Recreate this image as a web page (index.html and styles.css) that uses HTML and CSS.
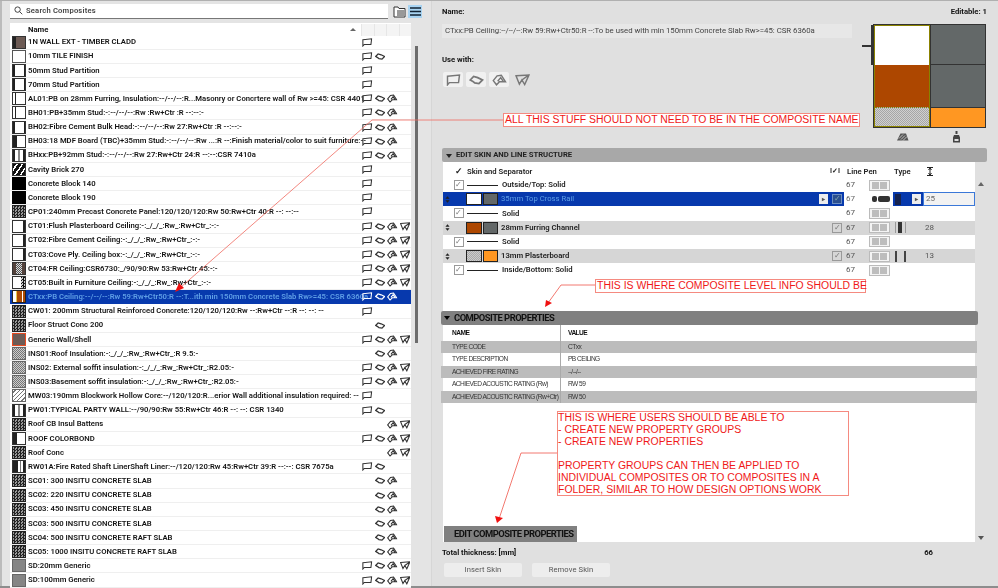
FILE: index.html
```html
<!DOCTYPE html>
<html lang="en">
<head>
<meta charset="utf-8">
<title>Composites</title>
<link rel="stylesheet" href="styles.css">
</head>
<body>
<svg class="defs" width="0" height="0" aria-hidden="true">
  <symbol id="w" viewBox="0 0 12 10"><path d="M1 1.800 11 .8 10.200 7.200 2.600 7.200 1 9Z" fill="none" stroke="currentColor" stroke-width="1.200"/></symbol>
  <symbol id="c" viewBox="0 0 12 10"><path d="M.8 5 3.600 2 7 3 11 5 8 8 4.500 7.500 3 6.200Z" fill="none" stroke="currentColor" stroke-width="1.500"/></symbol>
  <symbol id="s" viewBox="0 0 12 10"><path d="M.8 5.500 4 1.500 7.500 1 11 6.500 6 6.500 3.500 9ZM4.500 6 7 3 9 6" fill="none" stroke="currentColor" stroke-width="1.200"/></symbol>
  <symbol id="r" viewBox="0 0 12 10"><path d="M.6 1.500 11.400.8 7.800 8.800 5.500 5 3.400 8.500 .6 1.500ZM5.500 5 11.400.8" fill="none" stroke="currentColor" stroke-width="1.200"/></symbol>
  <symbol id="d" viewBox="0 0 6 8"><path d="M3 0 5.500 3H.5ZM3 8 .5 5H5.500Z" fill="currentColor"/></symbol>
</svg>
<div class="app">
  <section class="left">
    <div class="searchbar">
      <div class="search">
        <svg class="mag" viewBox="0 0 10 10"><circle cx="4" cy="4" r="3" fill="none" stroke="#333" stroke-width="1"/><path d="M6.200 6.200 9.200 9.200" stroke="#333" stroke-width="1"/></svg>
        <span>Search Composites</span>
      </div>
      <svg class="tool" viewBox="0 0 13 13"><path d="M1 2h4l1 1.500h6V12H1Z" fill="#fff" stroke="#333"/><path d="M4 6h7M4 8h7M4 10h7" stroke="#333"/></svg>
      <div class="toolon"><svg viewBox="0 0 11 9"><path d="M0 1h11M0 4.500h11M0 8h11" stroke="#123" stroke-width="1.500"/></svg></div>
    </div>
    <div class="listwrap">
      <div class="list">
        <div class="lhead"><span class="lname">Name</span><span class="sort"></span><i></i><i></i><i></i><i></i></div>
        <div class="row"><span class="sw brown"></span><span class="nm">1N WALL EXT - TIMBER CLADD</span><span class="ic"><svg><use href="#w"/></svg></span><span class="ic"></span><span class="ic"></span><span class="ic"></span></div>
        <div class="row"><span class="sw blank"></span><span class="nm">10mm TILE FINISH</span><span class="ic"><svg><use href="#w"/></svg></span><span class="ic"><svg><use href="#c"/></svg></span><span class="ic"></span><span class="ic"></span></div>
        <div class="row"><span class="sw stud"></span><span class="nm">50mm Stud Partition</span><span class="ic"><svg><use href="#w"/></svg></span><span class="ic"></span><span class="ic"></span><span class="ic"></span></div>
        <div class="row"><span class="sw stud"></span><span class="nm">70mm Stud Partition</span><span class="ic"><svg><use href="#w"/></svg></span><span class="ic"></span><span class="ic"></span><span class="ic"></span></div>
        <div class="row"><span class="sw stud2"></span><span class="nm">AL01:PB on 28mm Furring, Insulation:--/--/--:R...Masonry or Concrtere wall of Rw &gt;=45: CSR 4401</span><span class="ic"><svg><use href="#w"/></svg></span><span class="ic"><svg><use href="#c"/></svg></span><span class="ic"><svg><use href="#s"/></svg></span><span class="ic"></span></div>
        <div class="row"><span class="sw stud2"></span><span class="nm">BH01:PB+35mm Stud:-:--/--/--:Rw :Rw+Ctr :R --:--:-</span><span class="ic"><svg><use href="#w"/></svg></span><span class="ic"><svg><use href="#c"/></svg></span><span class="ic"><svg><use href="#s"/></svg></span><span class="ic"></span></div>
        <div class="row"><span class="sw stud"></span><span class="nm">BH02:Fibre Cement Bulk Head:-:--/--/--:Rw 27:Rw+Ctr :R --:--:-</span><span class="ic"><svg><use href="#w"/></svg></span><span class="ic"><svg><use href="#c"/></svg></span><span class="ic"><svg><use href="#s"/></svg></span><span class="ic"></span></div>
        <div class="row"><span class="sw mdf"></span><span class="nm">BH03:18 MDF Board (TBC)+35mm Stud:-:--/--/--:Rw ...:R --:Finish material/color to suit furniture:--</span><span class="ic"><svg><use href="#w"/></svg></span><span class="ic"><svg><use href="#c"/></svg></span><span class="ic"><svg><use href="#s"/></svg></span><span class="ic"></span></div>
        <div class="row"><span class="sw studs"></span><span class="nm">BHxx:PB+92mm Stud:-:--/--/--:Rw 27:Rw+Ctr 24:R --:--:CSR 7410a</span><span class="ic"><svg><use href="#w"/></svg></span><span class="ic"><svg><use href="#c"/></svg></span><span class="ic"><svg><use href="#s"/></svg></span><span class="ic"></span></div>
        <div class="row"><span class="sw brick"></span><span class="nm">Cavity Brick 270</span><span class="ic"><svg><use href="#w"/></svg></span><span class="ic"></span><span class="ic"></span><span class="ic"></span></div>
        <div class="row"><span class="sw black"></span><span class="nm">Concrete Block 140</span><span class="ic"><svg><use href="#w"/></svg></span><span class="ic"></span><span class="ic"></span><span class="ic"></span></div>
        <div class="row"><span class="sw black"></span><span class="nm">Concrete Block 190</span><span class="ic"><svg><use href="#w"/></svg></span><span class="ic"></span><span class="ic"></span><span class="ic"></span></div>
        <div class="row"><span class="sw conc"></span><span class="nm">CP01:240mm Precast Concrete Panel:120/120/120:Rw 50:Rw+Ctr 40:R --: --:--</span><span class="ic"><svg><use href="#w"/></svg></span><span class="ic"></span><span class="ic"></span><span class="ic"></span></div>
        <div class="row"><span class="sw rstud"></span><span class="nm">CT01:Flush Plasterboard Ceiling:-:_/_/_:Rw_:Rw+Ctr_:-:-</span><span class="ic"><svg><use href="#w"/></svg></span><span class="ic"><svg><use href="#c"/></svg></span><span class="ic"><svg><use href="#s"/></svg></span><span class="ic"><svg><use href="#r"/></svg></span></div>
        <div class="row"><span class="sw rstud"></span><span class="nm">CT02:Fibre Cement Ceiling:-:_/_/_:Rw_:Rw+Ctr_:-:-</span><span class="ic"><svg><use href="#w"/></svg></span><span class="ic"><svg><use href="#c"/></svg></span><span class="ic"><svg><use href="#s"/></svg></span><span class="ic"><svg><use href="#r"/></svg></span></div>
        <div class="row"><span class="sw rstud"></span><span class="nm">CT03:Cove Ply. Ceiling box:-:_/_/_:Rw_:Rw+Ctr_:-:-</span><span class="ic"><svg><use href="#w"/></svg></span><span class="ic"><svg><use href="#c"/></svg></span><span class="ic"><svg><use href="#s"/></svg></span><span class="ic"><svg><use href="#r"/></svg></span></div>
        <div class="row"><span class="sw fr"></span><span class="nm">CT04:FR Ceiling:CSR6730:_/90/90:Rw 53:Rw+Ctr 45:-:-</span><span class="ic"><svg><use href="#w"/></svg></span><span class="ic"><svg><use href="#c"/></svg></span><span class="ic"><svg><use href="#s"/></svg></span><span class="ic"><svg><use href="#r"/></svg></span></div>
        <div class="row"><span class="sw rconc"></span><span class="nm">CT05:Built in Furniture Ceiling:-:_/_/_:Rw_:Rw+Ctr_:-:-</span><span class="ic"><svg><use href="#w"/></svg></span><span class="ic"><svg><use href="#c"/></svg></span><span class="ic"><svg><use href="#s"/></svg></span><span class="ic"><svg><use href="#r"/></svg></span></div>
        <div class="row sel"><span class="sw cur"></span><span class="nm">CTxx:PB Ceiling:--/--/--:Rw 59:Rw+Ctr50:R --:T...ith min 150mm Concrete Slab Rw&gt;=45: CSR 6360a</span><span class="ic"><svg><use href="#w"/></svg></span><span class="ic"><svg><use href="#c"/></svg></span><span class="ic"><svg><use href="#s"/></svg></span><span class="ic"></span></div>
        <div class="row"><span class="sw conc"></span><span class="nm">CW01: 200mm Structural Reinforced Concrete:120/120/120:Rw --:Rw+Ctr --:R --: --: --</span><span class="ic"><svg><use href="#w"/></svg></span><span class="ic"></span><span class="ic"></span><span class="ic"></span></div>
        <div class="row"><span class="sw conc"></span><span class="nm">Floor Struct Conc 200</span><span class="ic"></span><span class="ic"><svg><use href="#c"/></svg></span><span class="ic"></span><span class="ic"></span></div>
        <div class="row"><span class="sw generic"></span><span class="nm">Generic Wall/Shell</span><span class="ic"><svg><use href="#w"/></svg></span><span class="ic"><svg><use href="#c"/></svg></span><span class="ic"><svg><use href="#s"/></svg></span><span class="ic"><svg><use href="#r"/></svg></span></div>
        <div class="row"><span class="sw ins"></span><span class="nm">INS01:Roof Insulation:-:_/_/_:Rw_:Rw+Ctr_:R 9.5:-</span><span class="ic"></span><span class="ic"><svg><use href="#c"/></svg></span><span class="ic"><svg><use href="#s"/></svg></span><span class="ic"></span></div>
        <div class="row"><span class="sw ins"></span><span class="nm">INS02: External soffit insulation:-:_/_/_:Rw_:Rw+Ctr_:R2.05:-</span><span class="ic"><svg><use href="#w"/></svg></span><span class="ic"><svg><use href="#c"/></svg></span><span class="ic"><svg><use href="#s"/></svg></span><span class="ic"><svg><use href="#r"/></svg></span></div>
        <div class="row"><span class="sw ins"></span><span class="nm">INS03:Basement soffit insulation:-:_/_/_:Rw_:Rw+Ctr_:R2.05:-</span><span class="ic"><svg><use href="#w"/></svg></span><span class="ic"><svg><use href="#c"/></svg></span><span class="ic"><svg><use href="#s"/></svg></span><span class="ic"><svg><use href="#r"/></svg></span></div>
        <div class="row"><span class="sw hatch"></span><span class="nm">MW03:190mm Blockwork Hollow Core:--/120/120:R...erior Wall additional insulation required: --</span><span class="ic"><svg><use href="#w"/></svg></span><span class="ic"></span><span class="ic"></span><span class="ic"></span></div>
        <div class="row"><span class="sw studs"></span><span class="nm">PW01:TYPICAL PARTY WALL:--/90/90:Rw 55:Rw+Ctr 46:R --: --: CSR 1340</span><span class="ic"><svg><use href="#w"/></svg></span><span class="ic"><svg><use href="#c"/></svg></span><span class="ic"></span><span class="ic"></span></div>
        <div class="row"><span class="sw conc"></span><span class="nm">Roof CB Insul Battens</span><span class="ic"></span><span class="ic"></span><span class="ic"><svg><use href="#s"/></svg></span><span class="ic"><svg><use href="#r"/></svg></span></div>
        <div class="row"><span class="sw mdf"></span><span class="nm">ROOF COLORBOND</span><span class="ic"><svg><use href="#w"/></svg></span><span class="ic"><svg><use href="#c"/></svg></span><span class="ic"><svg><use href="#s"/></svg></span><span class="ic"><svg><use href="#r"/></svg></span></div>
        <div class="row"><span class="sw conc"></span><span class="nm">Roof Conc</span><span class="ic"></span><span class="ic"></span><span class="ic"><svg><use href="#s"/></svg></span><span class="ic"><svg><use href="#r"/></svg></span></div>
        <div class="row"><span class="sw shaft"></span><span class="nm">RW01A:Fire Rated Shaft LinerShaft Liner:--/120/120:Rw 45:Rw+Ctr 39:R --:--: CSR 7675a</span><span class="ic"><svg><use href="#w"/></svg></span><span class="ic"><svg><use href="#c"/></svg></span><span class="ic"></span><span class="ic"></span></div>
        <div class="row"><span class="sw conc"></span><span class="nm">SC01: 300 INSITU CONCRETE SLAB</span><span class="ic"></span><span class="ic"><svg><use href="#c"/></svg></span><span class="ic"><svg><use href="#s"/></svg></span><span class="ic"></span></div>
        <div class="row"><span class="sw conc"></span><span class="nm">SC02: 220 INSITU CONCRETE SLAB</span><span class="ic"></span><span class="ic"><svg><use href="#c"/></svg></span><span class="ic"><svg><use href="#s"/></svg></span><span class="ic"></span></div>
        <div class="row"><span class="sw conc"></span><span class="nm">SC03: 450 INSITU CONCRETE SLAB</span><span class="ic"></span><span class="ic"><svg><use href="#c"/></svg></span><span class="ic"><svg><use href="#s"/></svg></span><span class="ic"></span></div>
        <div class="row"><span class="sw conc"></span><span class="nm">SC03: 500 INSITU CONCRETE SLAB</span><span class="ic"></span><span class="ic"><svg><use href="#c"/></svg></span><span class="ic"><svg><use href="#s"/></svg></span><span class="ic"></span></div>
        <div class="row"><span class="sw conc"></span><span class="nm">SC04: 500 INSITU CONCRETE RAFT SLAB</span><span class="ic"></span><span class="ic"><svg><use href="#c"/></svg></span><span class="ic"><svg><use href="#s"/></svg></span><span class="ic"></span></div>
        <div class="row"><span class="sw conc"></span><span class="nm">SC05: 1000 INSITU CONCRETE RAFT SLAB</span><span class="ic"></span><span class="ic"><svg><use href="#c"/></svg></span><span class="ic"><svg><use href="#s"/></svg></span><span class="ic"></span></div>
        <div class="row"><span class="sw grey"></span><span class="nm">SD:20mm Generic</span><span class="ic"><svg><use href="#w"/></svg></span><span class="ic"><svg><use href="#c"/></svg></span><span class="ic"><svg><use href="#s"/></svg></span><span class="ic"><svg><use href="#r"/></svg></span></div>
        <div class="row"><span class="sw grey"></span><span class="nm">SD:100mm Generic</span><span class="ic"><svg><use href="#w"/></svg></span><span class="ic"><svg><use href="#c"/></svg></span><span class="ic"><svg><use href="#s"/></svg></span><span class="ic"><svg><use href="#r"/></svg></span></div>
      </div>
      <div class="lscroll"><div class="thumb"></div></div>
    </div>
  </section>

  <section class="right">
    <div class="head"><b>Name:</b><b>Editable: 1</b></div>
    <div class="top">
      <div class="meta">
        <div class="nameinput">CTxx:PB Ceiling:--/--/--:Rw 59:Rw+Ctr50:R --:To be used with min 150mm Concrete Slab Rw&gt;=45: CSR 6360a</div>
        <div class="usewith">Use with:</div>
        <div class="usebtns">
          <span class="ub on"><svg><use href="#w"/></svg></span>
          <span class="ub on"><svg><use href="#c"/></svg></span>
          <span class="ub on"><svg><use href="#s"/></svg></span>
          <span class="ub"><svg><use href="#r"/></svg></span>
        </div>
      </div>
      <div class="previewcol">
        <div class="preview">
          <div class="pvcol pvl">
            <div class="pv1 pvwhite"></div>
            <div class="pv2 pvbrown"></div>
            <div class="pv3 pvhatch"></div>
          </div>
          <div class="pvcol pvr">
            <div class="pv1 pvgrey"></div>
            <div class="pv2 pvgrey"></div>
            <div class="pv3 pvorange"></div>
          </div>
          <span class="pin"></span>
        </div>
        <div class="pvicons">
          <svg viewBox="0 0 13 9"><path d="M1 8 4.500 1H10L12.500 8Z" fill="#555"/><path d="M3 6 7 2M5 7 9 3M7 8 11 4" stroke="#ddd" stroke-width=".8"/></svg>
          <svg viewBox="0 0 10 12"><path d="M4 0h2v3H4ZM2.500 4h5L8.500 6.500V11.500H1.500V6.500Z" fill="#444"/><path d="M3 8h4v2H3Z" fill="#ddd"/></svg>
        </div>
      </div>
    </div>

    <div class="sechead"><span class="tri"></span>EDIT SKIN AND LINE STRUCTURE</div>

    <div class="skinwrap">
      <div class="skin">
        <div class="sgrid shead">
          <span></span><span class="ckhead">&#10003;</span><span class="sname">Skin and Separator</span><span class="vis">I&#10003;I</span><span class="pen">Line Pen</span><span></span><span class="typ">Type</span><span class="thk"><svg viewBox="0 0 6 9"><path d="M0 .5h6M0 8.500h6M3 1v7M1.500 3 3 1 4.500 3M1.500 6 3 8 4.500 6" fill="none" stroke="#222"/></svg></span>
        </div>
        <div class="sgrid line"><span></span><span class="ck on">&#10003;</span><span class="sname"><i class="ln"></i>Outside/Top: Solid</span><span></span><span class="num">67</span><span class="pensw"><i></i><i></i></span><span></span><span></span></div>
        <div class="sgrid skinsel"><span class="drag"><svg><use href="#d"/></svg></span><span></span><span class="sname"><i class="s2 white"></i><i class="s2 gray"></i><em>35mm Top Cross Rail</em><u class="mini">&#9656;</u></span><span class="ck dark">&#10003;</span><span class="num wb">67</span><span class="pensw dk wb"><i></i><i></i></span><span class="tcell"><i class="tbar"></i><u class="mini">&#9656;</u></span><span class="num wb outl">25</span></div>
        <div class="sgrid line"><span></span><span class="ck on">&#10003;</span><span class="sname"><i class="ln"></i>Solid</span><span></span><span class="num">67</span><span class="pensw"><i></i><i></i></span><span></span><span></span></div>
        <div class="sgrid shade"><span class="drag"><svg><use href="#d"/></svg></span><span></span><span class="sname"><i class="s2 brownc"></i><i class="s2 gray"></i>28mm Furring Channel</span><span class="ck">&#10003;</span><span class="num">67</span><span class="pensw"><i></i><i></i></span><span class="tcell"><i class="tbar2"></i></span><span class="num">28</span></div>
        <div class="sgrid line"><span></span><span class="ck on">&#10003;</span><span class="sname"><i class="ln"></i>Solid</span><span></span><span class="num">67</span><span class="pensw"><i></i><i></i></span><span></span><span></span></div>
        <div class="sgrid shade"><span class="drag"><svg><use href="#d"/></svg></span><span></span><span class="sname"><i class="s2 lite"></i><i class="s2 orange"></i>13mm Plasterboard</span><span class="ck">&#10003;</span><span class="num">67</span><span class="pensw"><i></i><i></i></span><span class="tcell"><i class="tbar3"></i></span><span class="num">13</span></div>
        <div class="sgrid line"><span></span><span class="ck on">&#10003;</span><span class="sname"><i class="ln"></i>Inside/Bottom: Solid</span><span></span><span class="num">67</span><span class="pensw"><i></i><i></i></span><span></span><span></span></div>

        <div class="comphead"><span class="tri blk"></span>COMPOSITE PROPERTIES</div>
        <div class="props">
          <div class="prow phead"><span>NAME</span><span>VALUE</span></div>
          <div class="prow alt"><span>TYPE CODE</span><span>CTxx</span></div>
          <div class="prow"><span>TYPE DESCRIPTION</span><span>PB CEILING</span></div>
          <div class="prow alt"><span>ACHIEVED FIRE RATING</span><span>--/--/--</span></div>
          <div class="prow"><span>ACHIEVED ACOUSTIC RATING (Rw)</span><span>RW 59</span></div>
          <div class="prow alt"><span>ACHIEVED ACOUSTIC RATING (Rw+Ctr)</span><span>RW 50</span></div>
        </div>
        <div class="editprops">EDIT COMPOSITE PROPERTIES</div>
      </div>
      <div class="sscroll"><span class="up"></span><span class="down"></span></div>
    </div>

    <div class="total"><b>Total thickness: [mm]</b><b class="totalv">66</b></div>
    <div class="btns"><span class="btn">Insert Skin</span><span class="btn">Remove Skin</span></div>
  </section>
</div>

<svg class="overlay" viewBox="0 0 998 588" aria-hidden="true">
  <path d="M503 120H372L181 287" fill="none" stroke="#f06a60" stroke-width=".8"/>
  <path d="M175 292 179 283 184 288Z" fill="#f01010"/>
  <path d="M595 285H561L548 303" fill="none" stroke="#f06a60" stroke-width=".9"/>
  <path d="M545 307 546 300 552 303Z" fill="#f01010"/>
  <path d="M557 453H521L499 519" fill="none" stroke="#f06a60" stroke-width=".9"/>
  <path d="M497 523 495 516 503 518Z" fill="#f01010"/>
</svg>
<div class="note n1">ALL THIS STUFF SHOULD NOT NEED TO BE IN THE COMPOSITE NAME</div>
<div class="note n2">THIS IS WHERE COMPOSITE LEVEL INFO SHOULD BE</div>
<div class="note n3">THIS IS WHERE USERS SHOULD BE ABLE TO<br>- CREATE NEW PROPERTY GROUPS<br>- CREATE NEW PROPERTIES<br><br>PROPERTY GROUPS CAN THEN BE APPLIED TO<br>INDIVIDUAL COMPOSITES OR TO COMPOSITES IN A<br>FOLDER, SIMILAR TO HOW DESIGN OPTIONS WORK</div>
</body>
</html>
```
FILE: styles.css
```css
* { box-sizing: border-box; }
html, body { margin: 0; padding: 0; }
body {
  width: 998px; height: 588px; overflow: hidden; position: relative;
  background: #e2e2e2; color: #141414;
  font: 600 7.700px/1 Roboto, sans-serif;
}
.defs { position: absolute; }
.app { display: flex; height: 588px; filter: blur(.45px); border-top: 1px solid #b0b0b0; border-bottom: 2px solid #8d8d8d; }

/* left */
.left { width: 431px; padding: 2px 0 0 8px; background: #e4e4e4; flex: none; border-left: 2px solid #bbb; }
.searchbar { display: flex; align-items: center; height: 16px; }
.search { width: 378px; height: 15px; background: #fff; border-bottom: 1px solid #777; display: flex; align-items: center; padding-left: 4px; gap: 3px; color: #444; font-size: 7.600px; letter-spacing: .2px; }
.mag { width: 9px; height: 9px; }
.tool { width: 13px; height: 13px; margin-left: 5px; }
.toolon { width: 14px; height: 13px; margin-left: 2px; background: #a9d4f2; display: flex; align-items: center; justify-content: center; }
.toolon svg { width: 11px; height: 9px; }
.listwrap { display: flex; margin-top: 4px; height: 565px; }
.list { width: 401px; flex: none; background: #fff; overflow: hidden; }
.lhead { display: flex; align-items: center; height: 12.500px; padding-top: 1px; background: #fff; }
.lname { margin-left: 18px; flex: 1; font-weight: 700; }
.sort { width: 0; height: 0; border: 3px solid transparent; border-bottom: 3px solid #666; margin: -3px 5px 0 0; }
.lhead i { width: 12.400px; height: 11.500px; border-left: 1px solid #e6e6e6; background: #f4f4f4; }
.row { display: flex; align-items: center; height: 14.160px; border-bottom: 1px solid #efefef; padding-left: 2px; }
.nm { flex: 1; margin-left: 2px; white-space: nowrap; min-width: 0; }
.ic { width: 12.400px; height: 9px; flex: none; color: #333; display: flex; justify-content: center; }
.ic svg { width: 10.500px; height: 9px; }
.sel { background: #0739ad; color: #5f9fe6; border-bottom-color: #0739ad; }
.sel .ic { color: #fff; }

.sw { width: 14px; height: 13px; flex: none; border: 1px solid #333; background: #fff; }
.brown { background: linear-gradient(90deg, #222 0 3px, #6c5a54 3px); }
.blank { background: #fff; border-color: #555; }
.stud { background: linear-gradient(90deg, #222 0 2px, #fff 2px 11px, #222 11px); }
.stud2 { background: linear-gradient(90deg, #fff 0 2px, #222 2px 3px, #fff 3px); }
.mdf { background: linear-gradient(90deg, #222 0 4px, #fff 4px); }
.studs { background: linear-gradient(90deg, #222 0 2px, #fff 2px 5px, #888 5px 7px, #fff 7px 10px, #222 10px); }
.brick { background: repeating-linear-gradient(-55deg, #111 0 3px, #fff 3px 4.500px); }
.black { background: #000; border-color: #000; }
.conc { background: repeating-conic-gradient(#222 0 25%, #999 0 50%) 0 0 / 3px 3px; border-color: #222; }
.rstud { background: linear-gradient(90deg, #fff 0 10px, #222 10px); }
.fr { background: linear-gradient(90deg, #54423c 0 3px, transparent 3px 9px, #54423c 9px), repeating-conic-gradient(#555 0 25%, #ddd 0 50%) 0 0 / 2px 2px; }
.rconc { background: linear-gradient(90deg, #fff 0 8px, transparent 8px), repeating-conic-gradient(#111 0 25%, #ccc 0 50%) 0 0 / 3px 3px; }
.cur { background: linear-gradient(90deg, #fff 0 3px, #e9c94c 3px 4px, #ae4a03 4px 9px, #fff 9px 10px, #ae4a03 10px); border-color: #222; }
.generic { background: #6d5c56; border: 1px solid #e84a20; }
.ins { background: repeating-conic-gradient(#777 0 25%, #ccc 0 50%) 0 0 / 2px 2px; border-color: #666; }
.hatch { background: repeating-linear-gradient(-45deg, #fff 0 2px, #777 2px 3px); border-color: #666; }
.shaft { background: linear-gradient(90deg, #222 0 5px, #fff 5px 7px, #777 7px 8px, #fff 8px 10px, #222 10px); }
.grey { background: #858585; border-color: #666; }

.lscroll { width: 20px; flex: none; padding: 23px 0 0 4px; }
.lscroll .thumb { width: 3px; height: 297px; background: #6c6c6c; }

/* right */
.right { flex: 1; padding: 0 11px 0 10px; background: #e0e0e0; min-width: 0; border-left: 1px solid #d6d6d6; }
.head { display: flex; justify-content: space-between; padding-top: 6px; height: 17px; line-height: 10px; }
.head b { font-weight: 700; }
.top { display: flex; height: 124px; margin-top: 6px; }
.meta { width: 410px; flex: none; }
.nameinput { height: 14px; background: #e7e7e7; padding-left: 3px; line-height: 14px; color: #444; white-space: nowrap; font-weight: 400; font-size: 7.800px; }
.usewith { margin-top: 17px; line-height: 10px; font-weight: 700; }
.usebtns { display: flex; gap: 3px; margin-top: 7px; margin-left: 1px; }
.ub { width: 20px; height: 15px; display: flex; align-items: center; justify-content: center; color: #777; border-radius: 2px; }
.ub.on { background: #f1f1f1; }
.ub svg { width: 15px; height: 12px; }
.previewcol { margin-left: 21px; width: 113px; }
.preview { position: relative; display: flex; height: 104px; border: 1px solid #333; background: #333; gap: 1px; }
.pvcol { flex: 1; display: flex; flex-direction: column; }
.pvl { background: #8b8200; padding: 1px; }
.pvr { gap: 1px; }
.pv1 { height: 39px; flex: none; }
.pv2 { height: 42px; flex: none; }
.pv3 { flex: 1; }
.pvwhite { background: #fff; }
.pvbrown { background: #ad4700; }
.pvhatch { background: repeating-conic-gradient(#a6a6a6 0 25%, #d0d0d0 0 50%) 0 0 / 2px 2px; border-top: 1px dotted #8b8200; }
.pvgrey { background: #636868; }
.pvorange { background: #ff9722; }
.pin { position: absolute; left: -3px; top: 0; width: 3px; height: 40px; background: #333; }
.pin::before { content: ""; position: absolute; left: -9px; top: 20px; width: 9px; height: 1.500px; background: #333; }
.pvicons { display: flex; justify-content: space-around; margin-top: 3px; padding: 0 2px; }
.pvicons svg { width: 13px; height: 12px; }

.sechead { height: 14px; background: #a8a8a8; border-radius: 2px; display: flex; align-items: center; font-size: 7.700px; font-weight: 700; color: #222; white-space: nowrap; }
.tri { width: 0; height: 0; margin: 1px 4px 0 4px; border: 3px solid transparent; border-top: 4px solid #222; border-bottom: 0; }
.tri.blk { margin-left: 3px; margin-right: 4px; border-top-color: #000; }
.skinwrap { display: flex; height: 380px; }
.skin { width: 532px; flex: none; background: #fff; display: flex; flex-direction: column; padding-top: 3px; margin-left: 1px; }
.sscroll { flex: 1; display: flex; flex-direction: column; justify-content: space-between; align-items: center; padding: 20px 0 2px; }
.up { border: 3px solid transparent; border-top: 0; border-bottom: 4px solid #666; }
.down { border: 3px solid transparent; border-bottom: 0; border-top: 4px solid #555; }

.sgrid { display: grid; grid-template-columns: 9px 13px 365px 14px 25px 24px 30px 52px; height: 14.200px; align-items: center; color: #222; }
.shead { height: 13px; }
.ckhead { text-align: center; font-size: 9px; }
.vis { font-size: 7px; white-space: nowrap; }
.sname { padding-left: 1px; display: flex; align-items: center; min-width: 0; position: relative; height: 100%; white-space: nowrap; }
.shead .sname { padding-left: 2px; }
.pen { white-space: nowrap; padding-left: 3px; }
.typ { padding-left: 1px; }
.thk { padding-left: 4px; display: flex; }
.thk svg { width: 6px; height: 9px; }
.ln { width: 31px; height: 1px; background: #222; margin: 0 4px 0 1px; }
.ck { width: 10px; height: 10px; border: 1px solid #999; background: #fff; color: #777; font-size: 8px; line-height: 8px; text-align: center; justify-self: center; font-weight: 400; }
.ck.dark { background: #2b4f8f; border-color: #6d8ec0; color: #8aa; }
.shade .ck { background: #d6d6d6; }
.num { padding-left: 2px; color: #555; font-weight: 400; font-size: 8px; height: 100%; line-height: 14px; }
.pensw { display: flex; gap: 1px; width: 21px; height: 11px; border: 1px solid #bbb; background: #f4f4f4; padding: 1px 2px; justify-self: start; }
.pensw i { flex: 1; background: #bdbdbd; }
.skinsel { background: #0739ad; color: #5f9fe6; }
.shade { background: #d6d6d6; }
.drag { display: flex; justify-content: center; color: #222; }
.drag svg { width: 5px; height: 7px; }
.s2 { width: 15.500px; height: 12px; border: 1px solid #222; flex: none; margin-right: 1px; }
.s2 + .s2 { margin-right: 3px; }
.skinsel em { font-style: normal; font-weight: 400; }
.white { background: #fff; }
.gray { background: #636868; }
.brownc { background: #ad4700; }
.lite { background: repeating-conic-gradient(#aaa 0 25%, #ccc 0 50%) 0 0 / 2px 2px; }
.orange { background: #ff9722; }
.mini { position: absolute; right: 2px; top: 2px; width: 9px; height: 10px; background: #eee; color: #555; text-decoration: none; font-size: 6px; line-height: 10px; text-align: center; }
.wb { background: #fff; }
.pensw.dk { background: #fff; border-color: #fff; height: 14px; width: 24px; padding: 3px 2px; }
.pensw.dk i { background: #333; border-radius: 2px; }
.pensw.dk i:first-child { flex: .4; }
.skinsel .num { color: #666; }
.outl { border: 1px solid #3b78d8; line-height: 12px; background: #f2f2f2; }
.tcell { position: relative; height: 100%; display: flex; align-items: center; padding-left: 2px; }
.skinsel .tcell { background: #0739ad; }
.tbar { width: 6px; height: 11px; background: #16234e; }
.tbar2 { width: 11px; height: 11px; background: linear-gradient(90deg, #999 0 1px, transparent 1px 3px, #333 3px 7px, transparent 7px 10px, #999 10px); }
.tbar3 { width: 11px; height: 11px; background: linear-gradient(90deg, #444 0 2px, transparent 2px 9px, #444 9px); }

.comphead { height: 14px; margin: 33.600px -3px 0 -2px; background: #808080; border-radius: 2px; display: flex; align-items: center; font: 700 9.400px/1 Roboto, sans-serif; letter-spacing: -.5px; color: #111; white-space: nowrap; }
.props { margin: 0 -2px; font: 400 6.600px/1 "Liberation Sans", sans-serif; color: #333; letter-spacing: -.53px; }
.prow { display: grid; grid-template-columns: 120px 1fr; height: 12.500px; align-items: center; }
.prow span { height: 100%; display: flex; align-items: center; white-space: nowrap; }
.prow span:first-child { padding-left: 11px; border-right: 1px solid #aaa; }
.prow span:last-child { padding-left: 7px; }
.phead { height: 16px; font-weight: 700; color: #111; }
.alt { background: #bcbcbc; }
.editprops { margin: auto 0 0 1px; width: 133px; height: 16px; background: #808080; display: flex; align-items: center; padding-left: 10px; font: 700 9.400px/1 Roboto, sans-serif; letter-spacing: -.5px; color: #111; white-space: nowrap; }

.total { display: flex; margin-top: 5px; height: 11px; line-height: 11px; font-weight: 700; }
.total b { font-weight: 700; }
.totalv { margin-left: 408px; }
.btns { display: flex; gap: 10px; margin-top: 5px; margin-left: 2px; }
.btn { width: 78px; height: 14px; background: #ededed; border-radius: 2px; display: flex; align-items: center; justify-content: center; color: #555; font-size: 7.600px; font-weight: 400; letter-spacing: .1px; }

/* annotations laid over the screenshot */
.overlay { position: absolute; left: 0; top: 0; width: 998px; height: 588px; pointer-events: none; }
.note { position: absolute; background: #fff; color: #f01818; border: 1px solid #f58a80; font: 400 10.450px/12px "Liberation Sans", sans-serif; white-space: nowrap; }
.n1 { left: 503px; top: 113px; width: 357px; height: 14px; padding-left: 1px; }
.n2 { left: 595px; top: 279px; width: 271px; height: 14px; padding-left: 1px; }
.n3 { left: 557px; top: 411px; width: 292px; height: 85px; }
```
